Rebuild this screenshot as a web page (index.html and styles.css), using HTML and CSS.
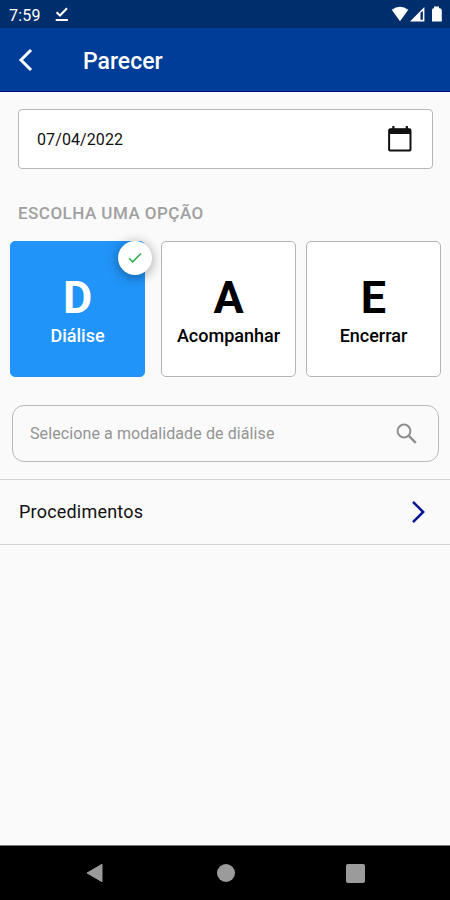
FILE: index.html
```html
<!DOCTYPE html>
<html lang="pt-BR">
<head>
<meta charset="utf-8">
<title>Parecer</title>
<link rel="stylesheet" href="styles.css">
</head>
<body>
<div class="status">
  <span class="clock">7:59</span>
  <svg class="task" width="14" height="15" viewBox="0 0 14 15" fill="none" stroke="#fff" stroke-width="2"><path d="M1.5 5.3 5 8.5 12 1.2M.7 13h12.2"/></svg>
  <svg class="signals" width="54" height="17" viewBox="0 0 54 17" fill="#fff"><path d="M.7 3.7Q9 -2.2 17.3 3.7L9 15.2Z"/><path fill-rule="evenodd" d="M19 15.5 33.4 .9V15.5ZM29.5 6.7V13.7H31.9V5Z"/><path d="M41 4Q41 2.3 43 2V.5H48V2Q50.8 2.3 50.8 4V15.5H41Z"/></svg>
</div>
<header class="appbar">
  <svg class="back" width="16" height="26" viewBox="0 0 16 26" fill="none" stroke="#fff" stroke-width="3"><path d="M14 3 4 13 14 23"/></svg>
  <h1>Parecer</h1>
</header>
<main>
  <div class="date">
    <span>07/04/2022</span>
    <svg width="24" height="26" viewBox="0 0 24 26"><rect x="1.1" y="3.2" width="21.4" height="21.4" rx="1.6" fill="none" stroke="#111" stroke-width="2"/><path d="M1 2.8h21.8V8H1zM4.3 0h2.2v4H4.3zM17.7 0h2.2v4h-2.2z" fill="#111"/></svg>
  </div>
  <h2>ESCOLHA UMA OPÇÃO</h2>
  <div class="options">
    <div class="card selected"><b>D</b><span>Diálise</span>
      <i class="badge"><svg width="14" height="12" viewBox="0 0 14 12" fill="none" stroke="#2cb34a" stroke-width="1.6"><path d="M1 6.2 4.7 9.8 13 1.5"/></svg></i>
    </div>
    <div class="card"><b>A</b><span>Acompanhar</span></div>
    <div class="card"><b>E</b><span>Encerrar</span></div>
  </div>
  <div class="search">
    <span>Selecione a modalidade de diálise</span>
    <svg width="22" height="22" viewBox="0 0 22 22" fill="none" stroke="#909090" stroke-width="2"><circle cx="8" cy="8" r="6.4"/><path stroke-width="2.5" d="M12.8 12.8 19.8 19.8"/></svg>
  </div>
  <div class="row">
    <span>Procedimentos</span>
    <svg width="15" height="24" viewBox="0 0 15 24" fill="none" stroke="#091690" stroke-width="2.5"><path d="M2 1.8 12.2 12 2 22.2"/></svg>
  </div>
</main>
<nav>
  <svg width="18" height="20" viewBox="0 0 18 20"><path d="M1 10 16 1.3V18.7Z" fill="#9b9b9b" stroke="#9b9b9b" stroke-linejoin="round"/></svg>
  <i class="home"></i>
  <i class="recent"></i>
</nav>
</body>
</html>
```
FILE: styles.css
```css
* { box-sizing: border-box; }
body {
  margin: 0;
  width: 450px;
  height: 900px;
  display: flex;
  flex-direction: column;
  overflow: hidden;
  background: #fafafa;
  font-family: Roboto, sans-serif;
  color: #000;
}
svg { display: block; flex: none; }
.status {
  height: 28px;
  display: flex;
  background: #002e6d;
  color: #fff;
}
.clock { width: 45px; margin-left: 9px; font-size: 16px; line-height: 31px; letter-spacing: .2px; }
.task { margin: 7px 0 0 1px; }
.signals { margin: 6px 5.5px 0 auto; }
.appbar {
  height: 64px;
  display: flex;
  align-items: center;
  padding-left: 17px;
  background: #003d98;
  border-bottom: 1.5px solid #05068f;
  color: #fff;
}
.back { margin-top: 1px; }
h1 { margin: 5px 0 0 50px; font-size: 23px; line-height: 28px; font-weight: 500; }
main { flex: 1; border-bottom: 1px solid #777; }
.date {
  margin: 17px 17px 0 18px;
  height: 60px;
  display: flex;
  align-items: center;
  justify-content: space-between;
  padding: 0 20px 0 18px;
  border: 1.5px solid #b7b7b7;
  border-radius: 4px;
  background: #fff;
  color: #111;
  font-size: 16px;
  letter-spacing: .1px;
}
h2 {
  margin: 34px 0 0 18px;
  font-size: 17px;
  line-height: 20px;
  font-weight: 500;
  letter-spacing: .47px;
  color: #a0a0a0;
}
.options { display: flex; gap: 10px; margin: 18px 0 0 10px; }
.card {
  position: relative;
  flex: none;
  width: 135px;
  height: 136px;
  display: flex;
  flex-direction: column;
  align-items: center;
  padding-top: 31px;
  border: 1px solid #b4b4b4;
  border-radius: 5px;
  background: #fff;
}
.card b { font-size: 45px; line-height: 50px; font-weight: 700; }
.card span { margin-top: 1px; font-size: 18px; line-height: 24px; font-weight: 500; }
.selected {
  margin-right: 6px;
  border-color: #2094f8;
  background: #2094f8;
  color: #fff;
}
.badge {
  position: absolute;
  left: 107px;
  top: -1px;
  width: 34px;
  height: 34px;
  display: flex;
  align-items: center;
  justify-content: center;
  border-radius: 50%;
  background: #fff;
  box-shadow: 0 2px 12px rgba(0, 0, 0, .38);
}
.search {
  margin: 28px 11px 0 12px;
  height: 57px;
  display: flex;
  align-items: center;
  justify-content: space-between;
  padding: 0 20px 0 17px;
  border: 1.5px solid #b9b9b9;
  border-radius: 12px;
  font-size: 16px;
  letter-spacing: .1px;
  color: #949494;
}
.row {
  margin-top: 17px;
  height: 66px;
  display: flex;
  align-items: center;
  justify-content: space-between;
  padding: 0 24px 1px 19px;
  border: solid #d2d2d2;
  border-width: 1px 0;
  font-size: 18px;
  letter-spacing: .2px;
  color: #111;
}
nav {
  height: 54px;
  display: flex;
  align-items: center;
  padding-left: 86px;
  background: #000;
}
.home { width: 18px; height: 18px; margin-left: 112.5px; border-radius: 50%; background: #9b9b9b; }
.recent { width: 19px; height: 19px; margin-left: 111px; border-radius: 2px; background: #9b9b9b; }
```
